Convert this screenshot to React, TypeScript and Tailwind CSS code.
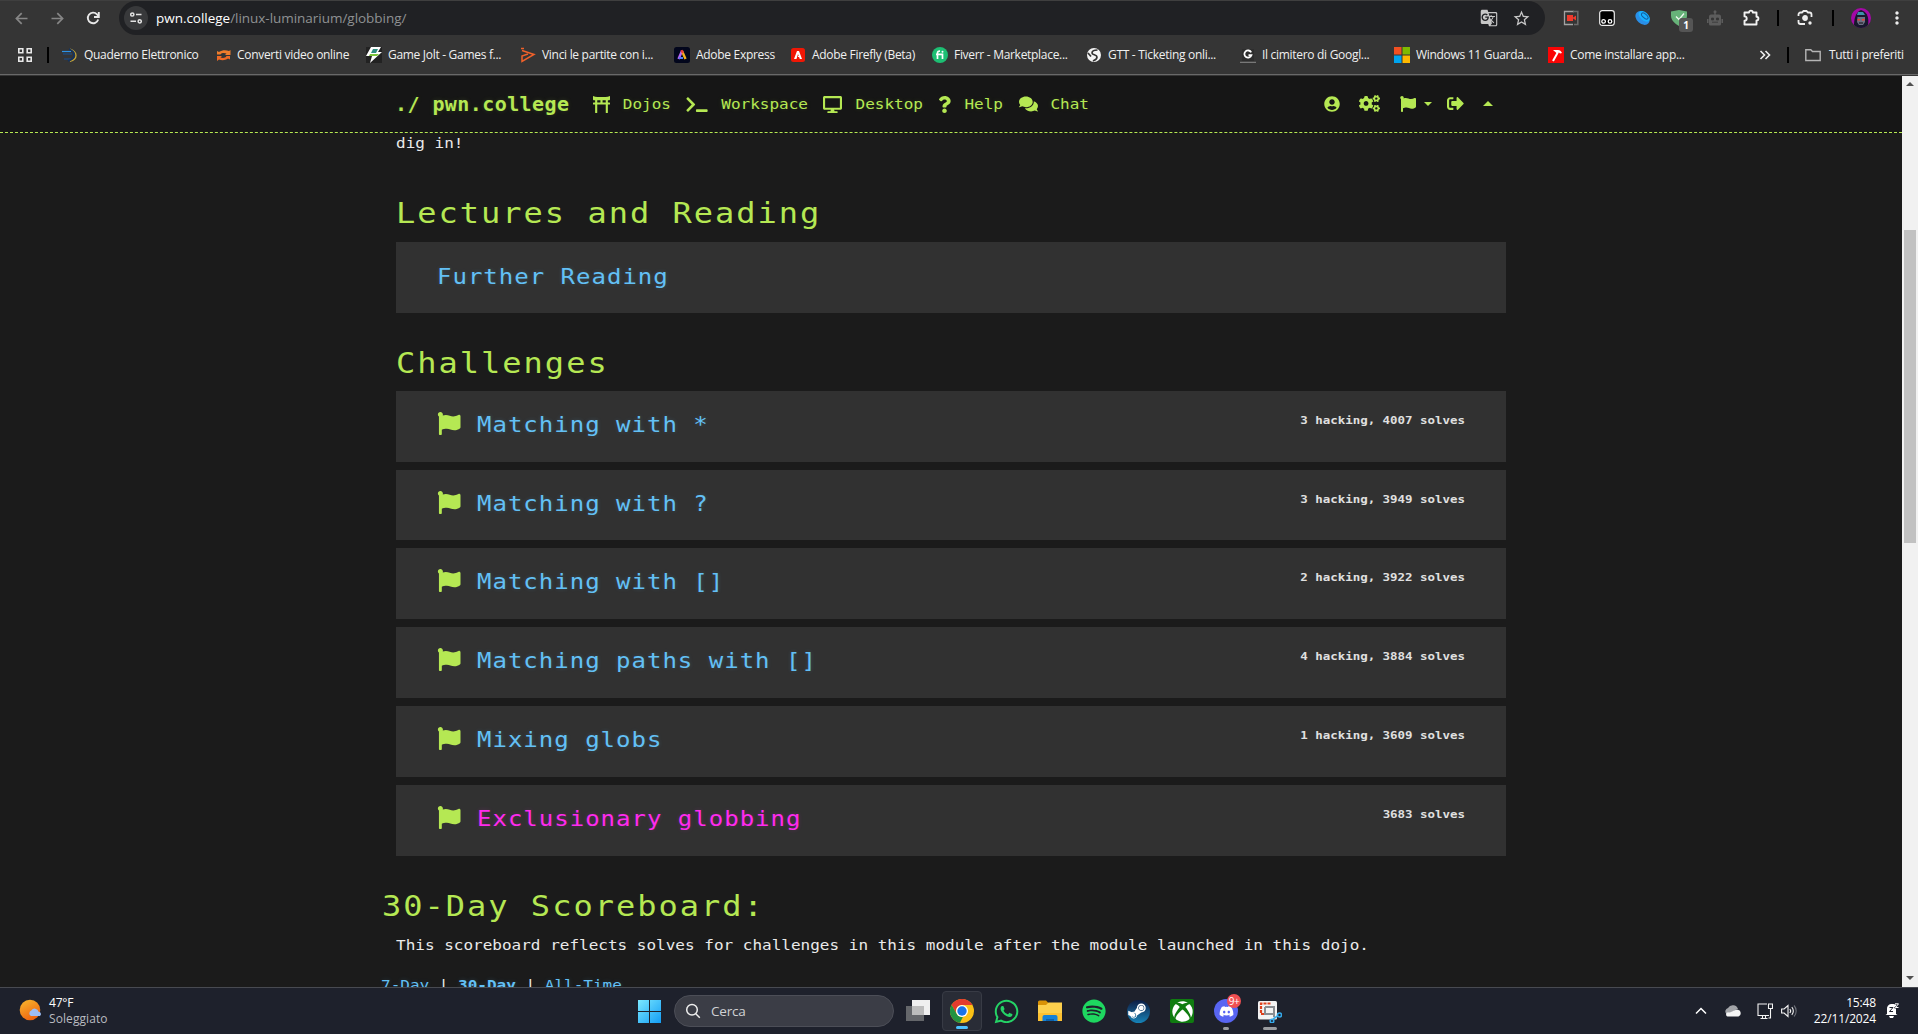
import type { ReactNode } from "react";
import {
  FaToriiGate, FaTerminal, FaDesktop, FaQuestion, FaComments, FaUserCircle, FaCogs, FaFlag,
  FaSignOutAlt, FaWhatsapp, FaSpotify, FaSteamSymbol, FaXbox, FaDiscord,
} from "react-icons/fa";
import { MdStarBorder, MdMoreVert, MdGTranslate } from "react-icons/md";

const UI = "font-['Open_Sans','Noto_Sans',sans-serif]";
const MONO = "font-['DejaVu_Sans_Mono','Liberation_Mono',monospace]";

function Slot({ children, className = "w-9" }: { children?: ReactNode; className?: string }) {
  return <div className={`flex h-full shrink-0 items-center justify-center ${className}`}>{children}</div>;
}

function Divider() {
  return <div className="h-4 w-[2px] bg-black" />;
}

function Toolbar() {
  return (
    <div className="flex h-[35px] items-center border-t border-[#3f3f3f]">
      <div className="flex h-full w-[119px] shrink-0 items-center text-[#868686]">
        <svg className="ml-[15px] h-[13px] w-[13px]" viewBox="0 0 13 13" fill="none" stroke="currentColor" strokeWidth="1.7"><path d="M12.5 6.5H1.5M6.7 1.2 1.4 6.5l5.3 5.3" /></svg>
        <svg className="ml-[23px] h-[13px] w-[13px]" viewBox="0 0 13 13" fill="none" stroke="currentColor" strokeWidth="1.7"><path d="M0.5 6.5h11M6.3 1.2l5.3 5.3-5.3 5.3" /></svg>
        <svg className="ml-[22px] h-[14px] w-[14px] text-[#e8e8e8]" viewBox="0 0 14 14" fill="none" stroke="currentColor" strokeWidth="1.9"><path d="M12.2 8.5A5.3 5.3 0 1 1 11 3.3L12.6 5" /><path d="M12.8 1v5H8" /></svg>
      </div>
      <div className="flex h-[34px] w-[1426px] shrink-0 items-center rounded-full bg-[#202124]">
        <div className="ml-[5px] flex h-6 w-6 items-center justify-center rounded-full bg-[#38393b]">
          <svg className="h-3 w-3" viewBox="0 0 12 12" fill="none" stroke="#e3e3e3" strokeWidth="1.5"><circle cx="2.3" cy="2.5" r="1.6" /><path d="M6 2.5h5.5M.5 9.3H6" /><circle cx="9.7" cy="9.3" r="1.6" /></svg>
        </div>
        <div className="ml-[8px] text-[13.5px] tracking-[-0.03px] whitespace-pre text-[#8f9193]">
          <span className="text-white">pwn.college</span>/linux-luminarium/globbing/
        </div>
        <div className="mr-[14px] ml-auto flex items-center gap-[14px] text-[#c7c7c7]">
          <MdGTranslate className="h-[18px] w-[18px]" />
          <MdStarBorder className="h-[19px] w-[19px]" />
        </div>
      </div>
      <div className="ml-2 flex h-full items-center">
        <Slot>
          <svg className="h-4 w-4" viewBox="0 0 16 16"><path d="M11 1.500H1.500v13H10" fill="none" stroke="#a3a3a3" strokeWidth="1.3" /><path d="M10 1.500h4.800V14.500H11" fill="none" stroke="#6b6b6b" strokeWidth="1.600" /><rect x="4" y="5" width="6" height="6" fill="#f03a2c" /><path d="m9.500 8 3.500-2.500v5z" fill="#f03a2c" /></svg>
        </Slot>
        <Slot>
          <svg className="h-4 w-4" viewBox="0 0 16 16"><rect x=".7" y=".7" width="14.6" height="14.6" rx="2.5" fill="#000" stroke="#eee" strokeWidth="1.2" /><circle cx="4.6" cy="11.4" r="1.8" fill="#000" stroke="#fff" strokeWidth="1.3" /><circle cx="11" cy="11.4" r="1.8" fill="#000" stroke="#fff" strokeWidth="1.3" /></svg>
        </Slot>
        <Slot>
          <svg className="h-4 w-4" viewBox="0 0 16 16"><ellipse cx="7.5" cy="8" rx="8" ry="5.8" transform="rotate(42 7.5 8)" fill="#2a8fe8" /><ellipse cx="9.2" cy="6.3" rx="6.6" ry="4" transform="rotate(42 9.2 6.3)" fill="#19b1ff" /><ellipse cx="9.8" cy="6" rx="4" ry="2" transform="rotate(42 9.8 6)" fill="none" stroke="#155d9e" /></svg>
        </Slot>
        <Slot>
          <div className="relative h-4 w-4">
            <svg className="h-4 w-4" viewBox="0 0 16 16"><path d="M0 1.5 8 0l8 1.500v4C16 10 12.500 13.500 8 16 3.500 13.500 0 10 0 5.500z" fill="#67b279" /><path d="m5 6.500 3 3 5-6" fill="none" stroke="#eefaf0" strokeWidth="1.3" /></svg>
            <div className="absolute top-2 left-2 flex h-[14px] w-[14px] items-center justify-center rounded-[3px] bg-[#555] text-[10px] leading-none font-bold text-white">1</div>
          </div>
        </Slot>
        <Slot>
          <svg className="h-4 w-4" viewBox="0 0 16 16"><path d="M7.300 2.500h1.400V5H7.300zM0 9h1.500v4H0zM14.500 9H16v4h-1.500zM4 4.500h8a2 2 0 0 1 2 2V14a1.500 1.500 0 0 1-1.500 1.500h-9A1.500 1.500 0 0 1 2 14V6.500a2 2 0 0 1 2-2z" fill="#5c5c5c" /><circle cx="8" cy="1.800" r="1.500" fill="#5c5c5c" /><path d="M4.500 8h2v2h-2zM9.500 8h2v2h-2zM5 12.200h6" fill="#353535" stroke="#353535" strokeWidth=".8" /></svg>
        </Slot>
        <Slot>
          <svg className="mb-[2px] h-[17px] w-[17px]" viewBox="0 0 17 17" fill="none" stroke="#f2f2f2" strokeWidth="1.900" strokeLinejoin="round"><path d="M1.500 3.500H6a1.900 1.900 0 0 1 3.800 0h3.700v4.200a1.900 1.900 0 0 1 0 3.800v4h-12v-3.700a2.200 2.200 0 0 0 0-4.400z" /></svg>
        </Slot>
        <Slot className="w-[18px]"><Divider /></Slot>
        <Slot>
          <svg className="h-4 w-4" viewBox="0 0 16 16" fill="none" stroke="#eee" strokeWidth="1.8"><path d="M1.500 6V4.500a2 2 0 0 1 2-2H5L6.500 1h3L11 2.500h1.500a2 2 0 0 1 2 2V7M1.500 10v2a2 2 0 0 0 2 2H8" /><circle cx="8" cy="8" r="2" fill="#eee" /><circle cx="13" cy="13" r=".8" fill="#eee" /></svg>
        </Slot>
        <Slot className="w-5"><Divider /></Slot>
        <Slot>
          <svg className="h-5 w-5" viewBox="0 0 20 20"><circle cx="10" cy="10" r="10" fill="#a409a6" /><path d="M3 17C3 13 4 4 10 2c7 2 8 9 7 15-4 4-10 4-14 0z" fill="#17182d" /><path d="M7 4h5l2 3H6z" fill="#3c91a8" /><path d="M6.500 9h7.500v5l-2 3H8l-2-3z" fill="#6c6f84" /><path d="M6.500 11H9v1.500H6.500zM11 11h2.500v1.500H11z" fill="#ef3d34" /><path d="M8 15h4" stroke="#111" /></svg>
        </Slot>
        <Slot><MdMoreVert className="h-5 w-5 text-[#eee]" /></Slot>
      </div>
    </div>
  );
}

const bookmarks: { label: string; width: string; icon: ReactNode }[] = [
  { label: "Quaderno Elettronico", width: "w-[153px]", icon: <><path d="M1 7h9M2 12h7" stroke="#184f92" strokeWidth="1.200" /><path d="M0 4.500h9" stroke="#2d93e8" strokeWidth="1.200" /><path d="M8 2c8 3 8 10 0 12.500" fill="none" stroke="#c3a43a" strokeWidth="1.300" /><path d="M7 2c7 3 7 9-1 12" fill="none" stroke="#15335e" strokeWidth="1.800" /></> },
  { label: "Converti video online", width: "w-[151px]", icon: <><path d="M2 7.500V4l2 1c3-2 7-2 10-1l1.500-1v5H10l1.500-1.500c-2-.8-5-.8-6 1z" fill="#ef7d2c" /><path d="M15 9v3.500l-2-1c-3 2-6 2-9 1L2 14V9h5l-1.500 1.500c2 .8 5 .8 6-1.500z" fill="#ef6a25" /></> },
  { label: "Game Jolt - Games f...", width: "w-[154px]", icon: <><rect width="16" height="16" fill="#222" /><path d="M5 0h10l-3 5h4L4 16l2-7H0z" fill="#fff" /><path d="M7 2h5l-2 4H5z" fill="#2f8d80" /><path d="M4 7h9l-2 2H3z" fill="#7cc33a" /></> },
  { label: "Vinci le partite con i...", width: "w-[154px]", icon: <g fill="none" stroke="#f1612a" strokeWidth="1.500"><path d="M2 3.500 14 7.500 2 14.500V9l6-2" /><path d="M1 1.500h3" /></g> },
  { label: "Adobe Express", width: "w-[116px]", icon: <><rect width="16" height="16" rx="2.500" fill="#02061c" /><path d="M4.500 12 8 4" stroke="#b765f5" strokeWidth="2.400" /><path d="M8 4l3.500 8" stroke="#f2b01e" strokeWidth="2.400" /><path d="M7 4.500 8 4l1 2" stroke="#ee3c3c" strokeWidth="2" /><path d="M5 11h4" stroke="#4d7cf7" strokeWidth="2" /></> },
  { label: "Adobe Firefly (Beta)", width: "w-[142px]", icon: <><rect x="1" y="1" width="14" height="14" rx="2.500" fill="#f01705" /><path d="M4 12 7 4h2l3 8h-2.200L8 7 6.500 12z" fill="#fff" /><path d="M8 9.500h2" stroke="#fff" /></> },
  { label: "Fiverr - Marketplace...", width: "w-[154px]", icon: <><circle cx="8" cy="8" r="8" fill="#1dbf73" /><path d="M5.500 12V6c0-1.500 1-2 2.500-1.800M4 7.300h6.500V12" fill="none" stroke="#fff" strokeWidth="1.700" /><circle cx="10.500" cy="4.800" r="1" fill="#fff" /></> },
  { label: "GTT - Ticketing onli...", width: "w-[154px]", icon: <><circle cx="8" cy="8" r="7" fill="#f5f5f5" /><path d="M11.500 3C8 3 6 4 6 6s5 1.500 5 4-2 3-4 4M2 6l3 3.500" fill="none" stroke="#353535" strokeWidth="1.700" /></> },
  { label: "Il cimitero di Googl...", width: "w-[154px]", icon: <><path d="M0 15.300h16" stroke="#8a8a8a" /><rect x="2" y="2" width="12" height="12" fill="#2d2d2d" /><path d="M11.200 5.400A3.600 3.600 0 1 0 11.400 8.200H8.500" fill="none" stroke="#fff" strokeWidth="1.800" /></> },
  { label: "Windows 11 Guarda...", width: "w-[154px]", icon: <><path d="M0 0h7.500v7.500H0z" fill="#f25022" /><path d="M8.500 0H16v7.500H8.500z" fill="#7fba00" /><path d="M0 8.500h7.500V16H0z" fill="#00a4ef" /><path d="M8.500 8.500H16V16H8.500z" fill="#ffb900" /></> },
  { label: "Come installare app...", width: "w-[150px]", icon: <><rect width="16" height="16" fill="#fa0505" /><path d="m5 14 5-9" stroke="#fff" strokeWidth="2" /><path d="M5 3h5c2 0 3 1 4 3l-2 .5L11 5.500 8.500 6z" fill="#fff" /></> },
];

function Bookmarks() {
  return (
    <div className="flex h-10 items-center border-b border-[#696969] text-[12px] tracking-[-0.300px] text-[#f0f0f0]">
      <svg className="ml-[18px] h-[14px] w-[14px] shrink-0" viewBox="0 0 14 14" fill="none" stroke="#e8e8e8" strokeWidth="1.600"><path d="M.8.8h4v4h-4zM9.200.8h4v4h-4zM.8 9.200h4v4h-4zM9.200 9.200h4v4h-4z" /></svg>
      <div className="ml-[15px]"><Divider /></div>
      <div className="ml-[13px] flex">
        {bookmarks.map((b) => (
          <div key={b.label} className={`flex shrink-0 items-center gap-[6px] whitespace-nowrap ${b.width}`}>
            <svg className="h-4 w-4 shrink-0" viewBox="0 0 16 16">{b.icon}</svg>
            <span>{b.label}</span>
          </div>
        ))}
      </div>
      <svg className="ml-[61px] h-3 w-3 shrink-0" viewBox="0 0 12 12" fill="none" stroke="#eee" strokeWidth="1.600"><path d="m1.500 2 4 4-4 4M6.500 2l4 4-4 4" /></svg>
      <div className="ml-[16px]"><Divider /></div>
      <svg className="ml-[16px] h-4 w-4 shrink-0" viewBox="0 0 16 16" fill="none" stroke="#b5b5b5" strokeWidth="1.400"><path d="M.8 2.800h5l1.700 1.700h7.700v9H.8z" /></svg>
      <span className="ml-2 whitespace-nowrap">Tutti i preferiti</span>
    </div>
  );
}

function NavItem({ icon, label, className }: { icon: ReactNode; label: string; className: string }) {
  return (
    <div className={`flex shrink-0 items-center justify-between ${className}`}>
      {icon}
      <span className="inline-block scale-y-[0.920] text-[16px] leading-5">{label}</span>
    </div>
  );
}

function SiteNav() {
  return (
    <nav className="flex h-[57px] shrink-0 items-center border-b border-dashed border-[#b5e853] bg-[#161616] pl-[395px] text-[#b5e853] [text-shadow:0_0_5px_rgba(181,232,83,0.15)]">
      <span className="inline-block w-[198px] shrink-0 scale-y-[0.940] text-[20px] font-bold tracking-[0.420px] whitespace-pre">./ pwn.college</span>
      <NavItem className="w-[78px]" icon={<FaToriiGate className="h-[17px] w-[17px]" />} label="Dojos" />
      <NavItem className="ml-[15px] w-[122px]" icon={<FaTerminal className="h-[17px] w-[22px]" />} label="Workspace" />
      <NavItem className="ml-[15px] w-[100px]" icon={<FaDesktop className="h-[17px] w-[19px]" />} label="Desktop" />
      <NavItem className="ml-[15px] w-[65px]" icon={<FaQuestion className="h-[17px] w-[13px]" />} label="Help" />
      <NavItem className="ml-4 w-[70px]" icon={<FaComments className="h-[18px] w-[19px]" />} label="Chat" />
      <div className="mb-px ml-[235px] flex items-center">
        <FaUserCircle className="h-4 w-4" />
        <FaCogs className="ml-[19px] h-[17px] w-[21px]" />
        <FaFlag className="ml-[19px] h-[16px] w-[18px]" />
        <div className="ml-[7px] border-x-4 border-t-4 border-x-transparent border-t-[#b5e853]" />
        <FaSignOutAlt className="ml-[15px] h-[17px] w-[17px]" />
        <div className="ml-[19px] border-x-[5px] border-b-[5px] border-x-transparent border-b-[#b5e853]" />
      </div>
    </nav>
  );
}

const challenges = [
  { name: "Matching with *", stats: "3 hacking, 4007 solves" },
  { name: "Matching with ?", stats: "3 hacking, 3949 solves" },
  { name: "Matching with []", stats: "2 hacking, 3922 solves" },
  { name: "Matching paths with []", stats: "4 hacking, 3884 solves" },
  { name: "Mixing globs", stats: "1 hacking, 3609 solves" },
  { name: "Exclusionary globbing", stats: "3683 solves", required: true },
];

function Heading({ children, className = "" }: { children: ReactNode; className?: string }) {
  return <h2 className={`origin-[0_30px] scale-y-[0.880] text-[32px] leading-10 tracking-[2px] text-[#b5e853] ${className}`}>{children}</h2>;
}

const CARD = "flex h-[70.8px] items-start bg-[#313131] px-[41px]";
const TITLE = "inline-block origin-[0_23px] scale-y-[0.900] text-[24px] leading-[30px] tracking-[1px]";
const GLOW_BLUE = "text-[#63c0f5] [text-shadow:0_0_5px_rgba(99,192,245,0.2)]";
const GLOW_PINK = "text-[#ff2bee] [text-shadow:0_0_5px_rgba(255,43,238,0.2)]";

function Content() {
  return (
    <main className="flex min-h-0 flex-1 flex-col overflow-hidden pl-[396px] text-[16px] text-[#eaeaea]">
      <div className="w-[1110px] shrink-0">
        <p className="mt-[-1px] scale-y-[0.920] leading-[22px]">dig in!</p>
        <Heading className="mt-[38px]">Lectures and Reading</Heading>
        <div className={`mt-[10px] ${CARD}`}>
          <span className={`mt-[19px] ${TITLE} ${GLOW_BLUE}`}>Further Reading</span>
        </div>
        <Heading className="mt-[29px]">Challenges</Heading>
        <div className="mt-[9px] flex flex-col gap-2">
          {challenges.map((c) => (
            <div key={c.name} className={CARD}>
              <FaFlag className="mt-[21px] h-[23px] w-[24px] shrink-0 text-[#b5e853]" />
              <span className={`mt-[18px] ml-4 ${TITLE} ${c.required ? GLOW_PINK : GLOW_BLUE}`}>{c.name}</span>
              <span className="mt-[20px] ml-auto inline-block origin-[0_13px] scale-y-[0.840] text-[12.450px] leading-[18px] font-bold whitespace-nowrap text-[#e0e0e0]">{c.stats}</span>
            </div>
          ))}
        </div>
        <Heading className="mt-[29px] ml-[-14px]">30-Day Scoreboard:</Heading>
        <p className="mt-[8px] scale-y-[0.920] leading-6 whitespace-nowrap">This scoreboard reflects solves for challenges in this module after the module launched in this dojo.</p>
        <p className="mt-4 ml-[-15px] scale-y-[0.920] leading-6 whitespace-pre">
          <span className={GLOW_BLUE}>7-Day</span> | <span className={`font-bold ${GLOW_BLUE}`}>30-Day</span> | <span className={GLOW_BLUE}>All-Time</span>
        </p>
      </div>
    </main>
  );
}

function Scrollbar() {
  return (
    <div className="flex w-4 shrink-0 flex-col items-center bg-[#f1f1f1]">
      <div className="mt-[6px] border-x-4 border-b-4 border-x-transparent border-b-[#505050]" />
      <div className="mt-[144px] h-[313px] w-3 bg-[#c1c1c1]" />
      <div className="mt-auto mb-[7px] border-x-4 border-t-4 border-x-transparent border-t-[#505050]" />
    </div>
  );
}

function TaskIcon({ children, active, mark }: { children: ReactNode; active?: boolean; mark?: string }) {
  return (
    <div className={`relative flex h-10 w-10 shrink-0 items-center justify-center rounded ${active ? "border border-[#383b45] bg-[#292c36]" : ""}`}>
      {children}
      {mark && <div className={`absolute bottom-[1px] h-[3px] rounded-full ${mark}`} />}
    </div>
  );
}

function Taskbar() {
  return (
    <footer className="flex h-[47px] shrink-0 items-center border-t border-[#484a51] bg-[#1e212c] text-[12px] text-white">
      <svg className="ml-[19px] h-6 w-6 shrink-0" viewBox="0 0 24 24">
        <defs><linearGradient id="sun" x2=".5" y2="1"><stop stopColor="#f8ba2e" /><stop offset="1" stopColor="#ee6511" /></linearGradient></defs>
        <circle cx="11" cy="11" r="10.300" fill="url(#sun)" /><path d="M12 17a3 3 0 0 1 .3-5.500 4 4 0 0 1 7.300 1.200 2.300 2.300 0 0 1 1.200 4.300z" fill="#9dbdf5" />
      </svg>
      <div className="mb-px ml-[6px] w-[586px] shrink-0 leading-4">
        <div className="tracking-[-0.200px]">47°F</div>
        <div className="tracking-[0.080px] text-[#b9bbc0]">Soleggiato</div>
      </div>
      <svg className="ml-[3px] h-[23px] w-[23px] shrink-0" viewBox="0 0 23 23">
        <defs><linearGradient id="win" x2="1" y2="1"><stop stopColor="#7be8ff" /><stop offset="1" stopColor="#139df5" /></linearGradient></defs>
        <path d="M0 0h11v11H0zM12 0h11v11H12zM0 12h11v11H0zM12 12h11v11H12z" fill="url(#win)" />
      </svg>
      <div className="ml-[13px] flex h-8 w-[220px] shrink-0 items-center rounded-full border border-[#4c4e57] bg-[#3b3d46]">
        <svg className="ml-[10px] h-4 w-4" viewBox="0 0 16 16" fill="none" stroke="#eee" strokeWidth="1.500"><circle cx="7" cy="6.800" r="5.300" /><path d="m10.800 10.700 4 4" /></svg>
        <span className="ml-[10px] text-[13.500px] tracking-[-0.200px] text-[#d0d1d4]">Cerca</span>
      </div>
      <div className="ml-1 flex shrink-0 gap-1">
        <TaskIcon><svg className="h-6 w-6" viewBox="0 0 24 24"><path d="M0 7h18v15H0z" fill="#64666a" /><path d="M6 1h18v15H6z" fill="#efefef" /><path d="M6 7h12v9H6z" fill="#bcbcbc" /></svg></TaskIcon>
        <TaskIcon active mark="w-3 bg-[#4cc2ff]">
          <svg className="h-6 w-6" viewBox="0 0 24 24"><circle cx="12" cy="12" r="12" fill="#fbc116" /><path d="M1.600 6A12 12 0 0 1 22.400 6H12a6 6 0 0 0-5.200 9z" fill="#e33b2e" /><path d="M1.600 6 6.800 15A6 6 0 0 0 13.500 17.800L12 24A12 12 0 0 1 1.600 6z" fill="#229342" /><path d="m17.200 15-5.200 9-2-.2 3-6z" fill="#fbc116" /><circle cx="12" cy="12" r="6" fill="#fff" /><circle cx="12" cy="12" r="4.700" fill="#1a73e8" /></svg>
        </TaskIcon>
        <TaskIcon><FaWhatsapp className="h-[27px] w-[27px] text-[#25d366]" /></TaskIcon>
        <TaskIcon><svg className="h-6 w-6" viewBox="0 0 24 24"><path d="M0 3a1.500 1.500 0 0 1 1.500-1.500H8L10.500 4v3H0z" fill="#d99206" /><path d="M0 6h8l2.500-2.500H24V22H0z" fill="#fdd04d" /><path d="M0 14h24v8H0z" fill="#fdc132" /><path d="M4.500 22v-4a2 2 0 0 1 2-2h11a2 2 0 0 1 2 2v4z" fill="#1481d8" /><path d="M8 22v-2h8v2z" fill="#0b62ad" /></svg></TaskIcon>
        <TaskIcon><FaSpotify className="h-6 w-6 text-[#1ed760]" /></TaskIcon>
        <TaskIcon><div className="flex h-[23px] w-[23px] items-center justify-start overflow-hidden rounded-full bg-linear-to-b from-[#0c1d44] to-[#1583b8]"><FaSteamSymbol className="h-[20px] w-[20px] shrink-0 text-white" /></div></TaskIcon>
        <TaskIcon><div className="flex h-6 w-6 items-center justify-center rounded-[2px] bg-[#107c10]"><FaXbox className="h-[21px] w-[21px] text-white" /></div></TaskIcon>
        <TaskIcon mark="w-[6px] bg-[#9a9ca0]">
          <div className="flex h-6 w-6 items-center justify-center rounded-full bg-[#5865f2]"><FaDiscord className="h-[15px] w-[15px] text-white" /></div>
          <div className="absolute top-[3px] left-[21px] flex h-[14px] w-[14px] items-center justify-center rounded-full bg-[#f04f52] text-[10px] leading-none tracking-[-0.500px]">9+</div>
        </TaskIcon>
        <TaskIcon mark="w-[14px] bg-[#9a9ca0]">
          <svg className="h-6 w-6" viewBox="0 0 24 24"><rect x="0" y="2" width="19" height="18.500" rx="1.500" fill="#f3f3f3" /><path d="M3 14V4.500h10M3 15h4" fill="none" stroke="#e0421e" strokeWidth="2.200" strokeDasharray="3 1" /><path d="M7 8h9v10M7 8v7h9" fill="none" stroke="#8a8d92" strokeWidth="2" /><circle cx="21.500" cy="16" r="2" fill="none" stroke="#35a9ea" strokeWidth="1.600" /><circle cx="14" cy="22" r="1.800" fill="none" stroke="#35a9ea" strokeWidth="1.600" /><path d="m19.500 17-4.500 3" stroke="#35a9ea" strokeWidth="1.600" /></svg>
        </TaskIcon>
      </div>
      <div className="mb-px ml-auto flex shrink-0 items-center">
        <svg className="h-3 w-3" viewBox="0 0 12 12" fill="none" stroke="#fff" strokeWidth="1.500"><path d="m1 8.500 5-5 5 5" /></svg>
        <svg className="ml-[18px] h-3 w-4" viewBox="0 0 16 12"><path d="M1.500 9A3.500 3.500 0 0 1 3 3a5.500 5.500 0 0 1 10 1z" fill="#a2a4a8" /><path d="M2.500 11.500A2.300 2.300 0 0 1 2 7.500C6 8 9 4 13 4.800a3.500 3.500 0 0 1 .5 6.700z" fill="#f5f5f5" /></svg>
        <svg className="ml-4 h-4 w-4" viewBox="0 0 16 16" fill="none" stroke="#f4f4f4" strokeWidth="1.100"><path d="M10 1H1v11.500h11M3.500 15.500h7M5.500 12.500v3M8.500 12.500v3M11.500 1h4v4.500h-4zM13.500 5.500v9.500h-2" /></svg>
        <svg className="ml-2 h-[14px] w-4" viewBox="0 0 16 14" fill="none" stroke="#f4f4f4" strokeWidth="1.100"><path d="M.6 5v4h2.500L7 12.500v-11L3.100 5z" /><path d="M8.800 5a3 3 0 0 1 0 4M10.800 3.200a5.500 5.500 0 0 1 0 7.600" /><path d="M13 1.500a8 8 0 0 1 0 11" stroke="#6c6f77" /></svg>
        <div className="w-[79px] text-right leading-4 tracking-[-0.150px]">
          <div>15:48</div>
          <div>22/11/2024</div>
        </div>
        <svg className="mr-[19px] ml-[9px] h-[15px] w-[14px]" viewBox="0 0 14 15"><path d="M2 11V6a4.500 4.500 0 0 1 4-5h5v10l1.500 1H.5z" fill="#fff" /><path d="M4 13h5l-1 2H5z" fill="#fff" /><path d="M4.500 4.500H8l-3.500 4H8M9.500 1H13L9.500 5H13" fill="none" stroke="#1e212c" strokeWidth="1" /><path d="M10 .8h3.500L10.500 4.500h3" fill="none" stroke="#fff" /></svg>
      </div>
    </footer>
  );
}

export default function App() {
  return (
    <div className={`flex h-[1034px] w-[1918px] flex-col overflow-hidden bg-[#353535] ${UI}`}>
      <header className="h-[76px] shrink-0 pb-px">
        <Toolbar />
        <Bookmarks />
      </header>
      <div className="flex min-h-0 flex-1">
        <div className={`flex min-w-0 flex-1 flex-col bg-[#1b1b1b] ${MONO}`}>
          <SiteNav />
          <Content />
        </div>
        <Scrollbar />
      </div>
      <Taskbar />
    </div>
  );
}
